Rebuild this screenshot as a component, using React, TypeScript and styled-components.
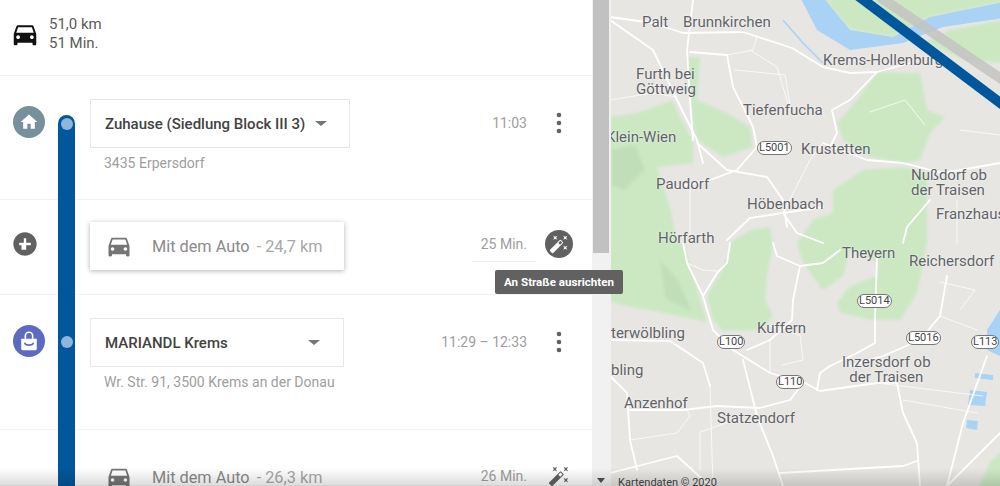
import React from 'react';
import styled, { createGlobalStyle } from 'styled-components';

const carPath =
  'M18.92 6.01C18.72 5.42 18.16 5 17.5 5h-11c-.66 0-1.21.42-1.42 1.01L3 12v8c0 .55.45 1 1 1h1c.55 0 1-.45 1-1v-1h12v1c0 .55.45 1 1 1h1c.55 0 1-.45 1-1v-8l-2.08-5.99zM6.5 16c-.83 0-1.5-.67-1.5-1.5S5.67 13 6.5 13s1.5.67 1.5 1.5S7.33 16 6.5 16zm11 0c-.83 0-1.5-.67-1.5-1.5s.67-1.5 1.5-1.5 1.5.67 1.5 1.5-.67 1.5-1.5 1.5zM5 11l1.5-4.5h11L19 11H5z';
const wandPath =
  'M7.5 5.6L10 7 8.6 4.5 10 2 7.5 3.4 5 2l1.4 2.5L5 7zm12 9.8L17 14l1.4 2.5L17 19l2.5-1.4L22 19l-1.4-2.5L22 14zM22 2l-2.5 1.4L17 2l1.4 2.5L17 7l2.5-1.4L22 7l-1.4-2.5zm-7.63 5.29a.996.996 0 0 0-1.41 0L1.29 18.96a.996.996 0 0 0 0 1.41l2.34 2.34c.39.39 1.02.39 1.41 0L16.7 11.05a.996.996 0 0 0 0-1.41l-2.33-2.35zm-1.03 5.49l-2.12-2.12 2.44-2.44 2.12 2.12-2.44 2.44z';

const CarIcon = ({ size, color }: { size: number; color: string }) => (
  <svg width={size} height={size} viewBox="0 0 24 24" fill={color}>
    <path d={carPath} />
  </svg>
);

const WandIcon = ({ size, color }: { size: number; color: string }) => (
  <svg width={size} height={size} viewBox="0 0 24 24" fill={color}>
    <path d={wandPath} />
  </svg>
);

const MoreIcon = () => (
  <svg width="24" height="24" viewBox="0 0 24 24" fill="#616161">
    <circle cx="12" cy="4" r="2.3" />
    <circle cx="12" cy="12" r="2.3" />
    <circle cx="12" cy="20" r="2.3" />
  </svg>
);

const mainRoads = [
  'M610 17 L653 23 L683 33 L743 32 L792 48 L823 67 L850 73 L877 72 L910 63',
  'M693 0 L687 50 L690 100 L693 140',
  'M610 20 L653 50 L677 100 L697 140 L703 163',
  'M690 52 L727 55 L733 87 L753 127 L757 147 L737 170 L710 180 L677 187',
  'M877 72 L850 100 L832 110 L837 133 L830 147',
  'M697 143 L727 170 L767 177 L783 200 L787 227',
  'M750 218 L783 213 L823 207',
  'M783 213 L797 233 L823 243',
  'M750 218 L727 240',
  'M823 143 L867 160 L903 163 L943 173 L1000 163',
  'M930 200 L907 227 L903 243',
  'M683 243 L687 263 L703 296 L713 330 L733 350 L770 373 L805 383 L820 391 L877 383 L897 383 L903 413 L917 443 L920 486',
  'M703 296 L717 273 L727 263 L730 243',
  'M773 243 L777 256 L800 266 L823 263 L840 250',
  'M800 266 L793 300 L792 320 L770 340 L747 350',
  'M877 256 L875 320 L875 343 L857 353 L830 366 L820 373 L817 390',
  'M947 276 L940 316 L920 340 L883 356 L850 366',
  'M743 360 L757 416 L773 456 L783 486',
  'M803 383 L790 400 L760 408 L717 406 L683 410 L630 410',
  'M610 340 L670 341 L703 363 L710 386',
  'M610 376 L627 393 L630 440 L637 470',
  'M610 473 L677 456 L710 486',
  'M780 473 L903 466 L917 461',
  'M1000 433 L973 460 L947 486',
  'M987 356 L963 423 L947 486',
];

const minorRoads = [
  'M727 55 L753 50 L757 37',
  'M750 50 L777 67 L783 87 L790 110',
  'M783 213 L810 160 L823 143',
  'M957 200 L957 243',
  'M610 100 L653 93 L677 97',
  'M690 187 L690 243',
  'M687 263 L703 270 L717 271',
  'M770 340 L770 373',
  'M940 316 L977 330',
  'M630 440 L677 433 L690 416 L687 410',
  'M903 400 L977 413',
  'M877 383 L983 396',
  'M710 386 L713 486',
  'M770 326 L800 335 L803 360 L782 365',
  'M735 420 L700 432 L700 470',
  'M940 282 L975 290 L960 310',
  'M870 112 L905 100 L925 125',
  'M960 130 L1000 135',
  'M735 70 L785 75 L790 105',
];

const MapDrawing = () => (
  <MapSvg viewBox="611 0 389 486">
    <defs>
      <filter id="soft">
        <feGaussianBlur stdDeviation="1.4" />
      </filter>
      <filter id="line">
        <feGaussianBlur stdDeviation="0.35" />
      </filter>
    </defs>
    <rect x="611" y="0" width="389" height="486" fill="#e8e6e3" />
    <g fill="#cbe8c3" filter="url(#soft)">
      <path d="M823 -3 L850 30 L893 37 L930 17 L1003 2 L1003 -3 Z" />
      <path d="M925 42 L950 30 L1003 20 L1003 63 L965 60 Z" />
      <path d="M877 72 L920 73 L927 110 L945 117 L930 133 L920 160 L903 163 L870 157 L843 140 L837 123 L857 100 Z" />
      <path d="M833 190 L863 170 L903 167 L927 173 L927 243 L917 293 L900 320 L873 320 L840 313 L837 303 L850 286 L877 276 L877 262 L850 250 L843 276 L823 290 L803 263 L797 243 L813 220 L833 213 Z" />
      <path d="M687 57 L700 57 L697 100 L727 113 L750 127 L753 147 L723 157 L697 140 L693 127 Z" />
      <path d="M608 117 L637 113 L673 100 L680 117 L693 140 L693 163 L657 167 L670 207 L677 243 L683 243 L707 322 L650 310 L620 305 L608 300 Z" />
      <path d="M730 243 L750 230 L770 227 L773 243 L767 276 L765 300 L773 316 L760 330 L723 331 L713 320 L707 296 L720 273 L730 250 Z" />
      <path d="M1003 450 L990 462 L978 489 L1003 489 Z" />
    </g>
    <g fill="#bcdcb4" opacity="0.7" filter="url(#soft)">
      <path d="M611 150 L635 145 L645 170 L625 190 L611 185 Z" />
      <path d="M660 260 L678 280 L692 312 L665 298 Z" />
    </g>
    <path
      d="M823 -3 L850 30 L893 37 L930 17 L1003 2 L1003 18 L943 27 L903 43 L850 50 L817 30 L800 -3 Z"
      fill="#a9d2f5"
      filter="url(#line)"
    />
    <g fill="#a9d2f5" filter="url(#line)">
      <path d="M987 330 L1000 310 L1000 356 L987 350 Z" />
      <path d="M975 373 L993 375 L993 380 L975 378 Z" />
      <path d="M970 390 L987 392 L985 406 L968 405 Z" />
      <path d="M967 420 L978 421 L977 430 L966 428 Z" />
    </g>
    <path d="M783 20 L803 43 L823 63" fill="none" stroke="#a9d2f5" strokeWidth="1.6" />
    <g fill="none" stroke="#ffffff" strokeLinejoin="round" strokeLinecap="round" filter="url(#line)">
      <g strokeWidth="1.8">
        {mainRoads.map(d => (
          <path key={d} d={d} />
        ))}
      </g>
      <g strokeWidth="1" opacity="0.75">
        {minorRoads.map(d => (
          <path key={d} d={d} />
        ))}
      </g>
    </g>
  </MapSvg>
);

const RouteDrawing = () => (
  <RouteSvg viewBox="611 0 389 486">
    <line x1="880" y1="-3" x2="1003" y2="80" stroke="#c4c4c2" strokeWidth="10" opacity="0.85" />
    <line x1="857" y1="-5" x2="1003" y2="105" stroke="#01579b" strokeWidth="10" />
  </RouteSvg>
);

const places: { name: string; x: number; y: number; center?: boolean }[] = [
  { name: 'Palt', x: 642, y: 15 },
  { name: 'Brunnkirchen', x: 683, y: 15 },
  { name: 'Krems-Hollenburg', x: 823, y: 53 },
  { name: 'Furth bei\nGöttweig', x: 636, y: 67 },
  { name: 'Tiefenfucha', x: 743, y: 103 },
  { name: 'Klein-Wien', x: 606, y: 130 },
  { name: 'Krustetten', x: 801, y: 142 },
  { name: 'Nußdorf ob\nder Traisen', x: 911, y: 168 },
  { name: 'Paudorf', x: 656, y: 177 },
  { name: 'Höbenbach', x: 747, y: 197 },
  { name: 'Franzhaus', x: 936, y: 207 },
  { name: 'Hörfarth', x: 658, y: 231 },
  { name: 'Theyern', x: 842, y: 246 },
  { name: 'Reichersdorf', x: 909, y: 254 },
  { name: 'Kuffern', x: 757, y: 321 },
  { name: 'terwölbling', x: 611, y: 326 },
  { name: 'Inzersdorf ob\nder Traisen', x: 842, y: 355, center: true },
  { name: 'bling', x: 611, y: 363 },
  { name: 'Anzenhof', x: 624, y: 396 },
  { name: 'Statzendorf', x: 717, y: 411 },
];

const shields = [
  { name: 'L5001', x: 757, y: 141 },
  { name: 'L5014', x: 857, y: 294 },
  { name: 'L5016', x: 906, y: 331 },
  { name: 'L100', x: 717, y: 335 },
  { name: 'L113', x: 971, y: 335 },
  { name: 'L110', x: 776, y: 375 },
];

export default function App() {
  return (
    <Page>
      <GlobalStyle />
      <Panel>
        <Summary>
          <CarIcon size={30} color="#111" />
          <SummaryText>
            <div>51,0 km</div>
            <div>51 Min.</div>
          </SummaryText>
        </Summary>

        <Row $height={124}>
          <IconCell $top={30}>
            <StopBadge $color="#78909c">
              <svg width="20" height="20" viewBox="0 0 24 24" fill="#fff">
                <path d="M10 20v-6h4v6h5v-8h3L12 3 2 12h3v8z" />
              </svg>
            </StopBadge>
          </IconCell>
          <Track $first>
            <Dot $top={3} />
          </Track>
          <Main $top={23}>
            <SelectBox $width={260} $caretGap={22}>
              <span>Zuhause (Siedlung Block III 3)</span>
              <Caret />
            </SelectBox>
            <Address>3435 Erpersdorf</Address>
          </Main>
          <Side $top={33}>
            <Time>11:03</Time>
            <SideIcon>
              <MoreIcon />
            </SideIcon>
          </Side>
        </Row>

        <Row $height={95}>
          <IconCell $top={30} $small>
            <svg width="28" height="28" viewBox="0 0 24 24" fill="#616161">
              <path d="M12 2C6.48 2 2 6.48 2 12s4.48 10 10 10 10-4.48 10-10S17.52 2 12 2zm5 11h-4v4h-4v-4H7v-2h4V7h2v4h4v2z" />
            </svg>
          </IconCell>
          <Track />
          <Main $top={22}>
            <LegCard>
              <CarIcon size={28} color="#757575" />
              <LegLabel>
                Mit dem Auto <LegDistance>- 24,7 km</LegDistance>
              </LegLabel>
            </LegCard>
          </Main>
          <Side $top={30}>
            <TimeField>25 Min.</TimeField>
            <SideIcon>
              <WandBadge>
                <WandIcon size={20} color="#fff" />
              </WandBadge>
            </SideIcon>
          </Side>
        </Row>

        <Row $height={135}>
          <IconCell $top={30}>
            <StopBadge $color="#5c6bc0">
              <svg width="22" height="22" viewBox="0 0 24 24">
                <path d="M3.5 9.5h17v11a1.5 1.5 0 0 1-1.5 1.5H5a1.5 1.5 0 0 1-1.5-1.5z" fill="#fff" />
                <path d="M8 9.5V6.5a4 4 0 0 1 8 0v3" fill="none" stroke="#fff" strokeWidth="1.8" />
                <path d="M7.5 14.5c1.2 2.6 7.8 2.6 9 0" fill="none" stroke="#5c6bc0" strokeWidth="1.8" strokeLinecap="round" />
              </svg>
            </StopBadge>
          </IconCell>
          <Track>
            <Dot $top={41} />
          </Track>
          <Main $top={23}>
            <SelectBox $width={254} $caretGap={23}>
              <span>MARIANDL Krems</span>
              <Caret />
            </SelectBox>
            <Address>Wr. Str. 91, 3500 Krems an der Donau</Address>
          </Main>
          <Side $top={33}>
            <Time>11:29 – 12:33</Time>
            <SideIcon>
              <MoreIcon />
            </SideIcon>
          </Side>
        </Row>

        <Row $height={56}>
          <IconCell $top={0} />
          <Track />
          <Main $top={33}>
            <LegPlain>
              <CarIcon size={28} color="#757575" />
              <LegLabel>
                Mit dem Auto <LegDistance>- 26,3 km</LegDistance>
              </LegLabel>
            </LegPlain>
          </Main>
          <Side $top={32}>
            <Time>26 Min.</Time>
            <SideIcon>
              <WandIcon size={22} color="#616161" />
            </SideIcon>
          </Side>
        </Row>
      </Panel>

      <ScrollBar>
        <ScrollThumb />
        <ScrollArrow />
      </ScrollBar>

      <MapArea>
        <MapDrawing />
        {places.map(p => (
          <PlaceLabel key={p.name} $x={p.x - 611} $y={p.y} $center={p.center}>
            {p.name}
          </PlaceLabel>
        ))}
        {shields.map(s => (
          <RoadShield key={s.name} $x={s.x - 611} $y={s.y}>
            {s.name}
          </RoadShield>
        ))}
        <RouteDrawing />
        <Attribution>Kartendaten © 2020</Attribution>
      </MapArea>

      <Tooltip>An Straße ausrichten</Tooltip>
      <BottomFade />
    </Page>
  );
}

const GlobalStyle = createGlobalStyle`
  html, body {
    margin: 0;
    padding: 0;
    height: 100%;
    overflow: hidden;
    background: #fff;
    font-family: Roboto, "Liberation Sans", sans-serif;
  }
`;

const Page = styled.div`
  position: relative;
  display: flex;
  width: 1000px;
  height: 486px;
  overflow: hidden;
`;

const Panel = styled.div`
  width: 592px;
  flex-shrink: 0;
  display: flex;
  flex-direction: column;
`;

const Summary = styled.div`
  height: 76px;
  flex-shrink: 0;
  box-sizing: border-box;
  padding: 15px 0 0 10px;
  display: flex;
  align-items: flex-start;
  gap: 9px;
  border-bottom: 1px solid #f3f3f3;

  svg {
    margin-top: 4px;
  }
`;

const SummaryText = styled.div`
  font-size: 15px;
  line-height: 19px;
  color: #5a5a5a;
`;

const Row = styled.div<{ $height: number }>`
  height: ${p => p.$height}px;
  flex-shrink: 0;
  box-sizing: border-box;
  display: grid;
  grid-template-columns: 58px 17px 1fr auto;
  border-bottom: 1px solid #f3f3f3;
`;

const IconCell = styled.div<{ $top: number; $small?: boolean }>`
  padding: ${p => p.$top}px 0 0 ${p => (p.$small ? 11 : 13)}px;
`;

const StopBadge = styled.div<{ $color: string }>`
  width: 32px;
  height: 32px;
  border-radius: 50%;
  background: ${p => p.$color};
  display: flex;
  align-items: center;
  justify-content: center;
`;

const Track = styled.div<{ $first?: boolean }>`
  position: relative;
  background: #01579b;
  margin-top: ${p => (p.$first ? 39 : 0)}px;
  margin-bottom: -1px;
  border-radius: ${p => (p.$first ? '9px 9px 0 0' : '0')};
`;

const Dot = styled.div<{ $top: number }>`
  position: absolute;
  left: 2.5px;
  top: ${p => p.$top}px;
  width: 12px;
  height: 12px;
  border-radius: 50%;
  background: #8db6dc;
`;

const Main = styled.div<{ $top: number }>`
  padding: ${p => p.$top}px 0 0 15px;
`;

const SelectBox = styled.div<{ $width: number; $caretGap: number }>`
  width: ${p => p.$width}px;
  height: 49px;
  box-sizing: border-box;
  border: 1px solid #e8e8e8;
  padding: 0 ${p => p.$caretGap}px 0 14px;
  display: flex;
  align-items: center;
  justify-content: space-between;
  font-size: 15px;
  font-weight: 500;
  color: #424242;
`;

const Caret = styled.div`
  width: 0;
  height: 0;
  border-left: 6px solid transparent;
  border-right: 6px solid transparent;
  border-top: 5px solid #757575;
`;

const Address = styled.div`
  margin: 7px 0 0 14px;
  font-size: 14px;
  line-height: 17px;
  color: #9e9e9e;
`;

const LegCard = styled.div`
  width: 254px;
  height: 48px;
  box-sizing: border-box;
  padding-left: 15px;
  display: flex;
  align-items: center;
  background: #fff;
  box-shadow: 0 1px 5px rgba(0, 0, 0, 0.3);
`;

const LegPlain = styled.div`
  padding-left: 15px;
  display: flex;
  align-items: center;
  height: 28px;
`;

const LegLabel = styled.div`
  margin-left: 19px;
  font-size: 16.3px;
  color: #8a8a8a;
  white-space: nowrap;
`;

const LegDistance = styled.span`
  margin-left: 3px;
  color: #a8a8a8;
`;

const Side = styled.div<{ $top: number }>`
  padding: ${p => p.$top}px 19px 0 0;
  display: flex;
  align-items: flex-start;
  gap: 18px;
`;

const Time = styled.div`
  height: 28px;
  line-height: 28px;
  font-size: 14px;
  color: #9e9e9e;
  white-space: nowrap;
`;

const TimeField = styled(Time)`
  width: 64px;
  height: 32px;
  box-sizing: border-box;
  padding-right: 9px;
  margin-right: -9px;
  text-align: right;
  border-bottom: 1px solid #ececec;
`;

const SideIcon = styled.div`
  width: 28px;
  height: 28px;
  display: flex;
  align-items: center;
  justify-content: center;
`;

const WandBadge = styled.div`
  width: 28px;
  height: 28px;
  border-radius: 50%;
  background: #616161;
  display: flex;
  align-items: center;
  justify-content: center;
`;

const ScrollBar = styled.div`
  position: relative;
  width: 19px;
  flex-shrink: 0;
  background: #f1f1f1;
`;

const ScrollThumb = styled.div`
  width: 16px;
  height: 253px;
  margin-left: 1px;
  background: #c1c1c1;
`;

const ScrollArrow = styled.div`
  position: absolute;
  left: 5px;
  bottom: 3px;
  width: 0;
  height: 0;
  border-left: 4px solid transparent;
  border-right: 4px solid transparent;
  border-top: 5px solid #505050;
`;

const MapArea = styled.div`
  position: relative;
  flex: 1;
  overflow: hidden;
`;

const MapSvg = styled.svg`
  display: block;
  width: 100%;
  height: 100%;
`;

const RouteSvg = styled.svg`
  position: absolute;
  left: 0;
  top: 0;
  width: 100%;
  height: 100%;
`;

const PlaceLabel = styled.div<{ $x: number; $y: number; $center?: boolean }>`
  position: absolute;
  left: ${p => p.$x}px;
  top: ${p => p.$y}px;
  font-size: 15px;
  line-height: 15px;
  color: #5f6368;
  white-space: pre;
  text-align: ${p => (p.$center ? 'center' : 'left')};
  text-shadow: 0 0 2px #fff;
`;

const RoadShield = styled.div<{ $x: number; $y: number }>`
  position: absolute;
  left: ${p => p.$x}px;
  top: ${p => p.$y}px;
  height: 12px;
  line-height: 12px;
  padding: 0 1px;
  font-size: 11px;
  color: #444;
  background: #fff;
  border: 1.5px solid #777;
  border-radius: 7px;
`;

const Attribution = styled.div`
  position: absolute;
  left: 7px;
  bottom: -3px;
  font-size: 11px;
  line-height: 12px;
  color: #444;
`;

const Tooltip = styled.div`
  position: absolute;
  left: 495px;
  top: 270px;
  width: 128px;
  height: 24px;
  box-sizing: border-box;
  border-radius: 2px;
  background: #616161;
  color: #fff;
  font-size: 11.6px;
  font-weight: 700;
  line-height: 25px;
  text-align: center;
  white-space: nowrap;
`;

const BottomFade = styled.div`
  position: absolute;
  left: 0;
  right: 0;
  bottom: 0;
  height: 18px;
  background: linear-gradient(to bottom, rgba(0, 0, 0, 0), rgba(0, 0, 0, 0.14));
  pointer-events: none;
`;
